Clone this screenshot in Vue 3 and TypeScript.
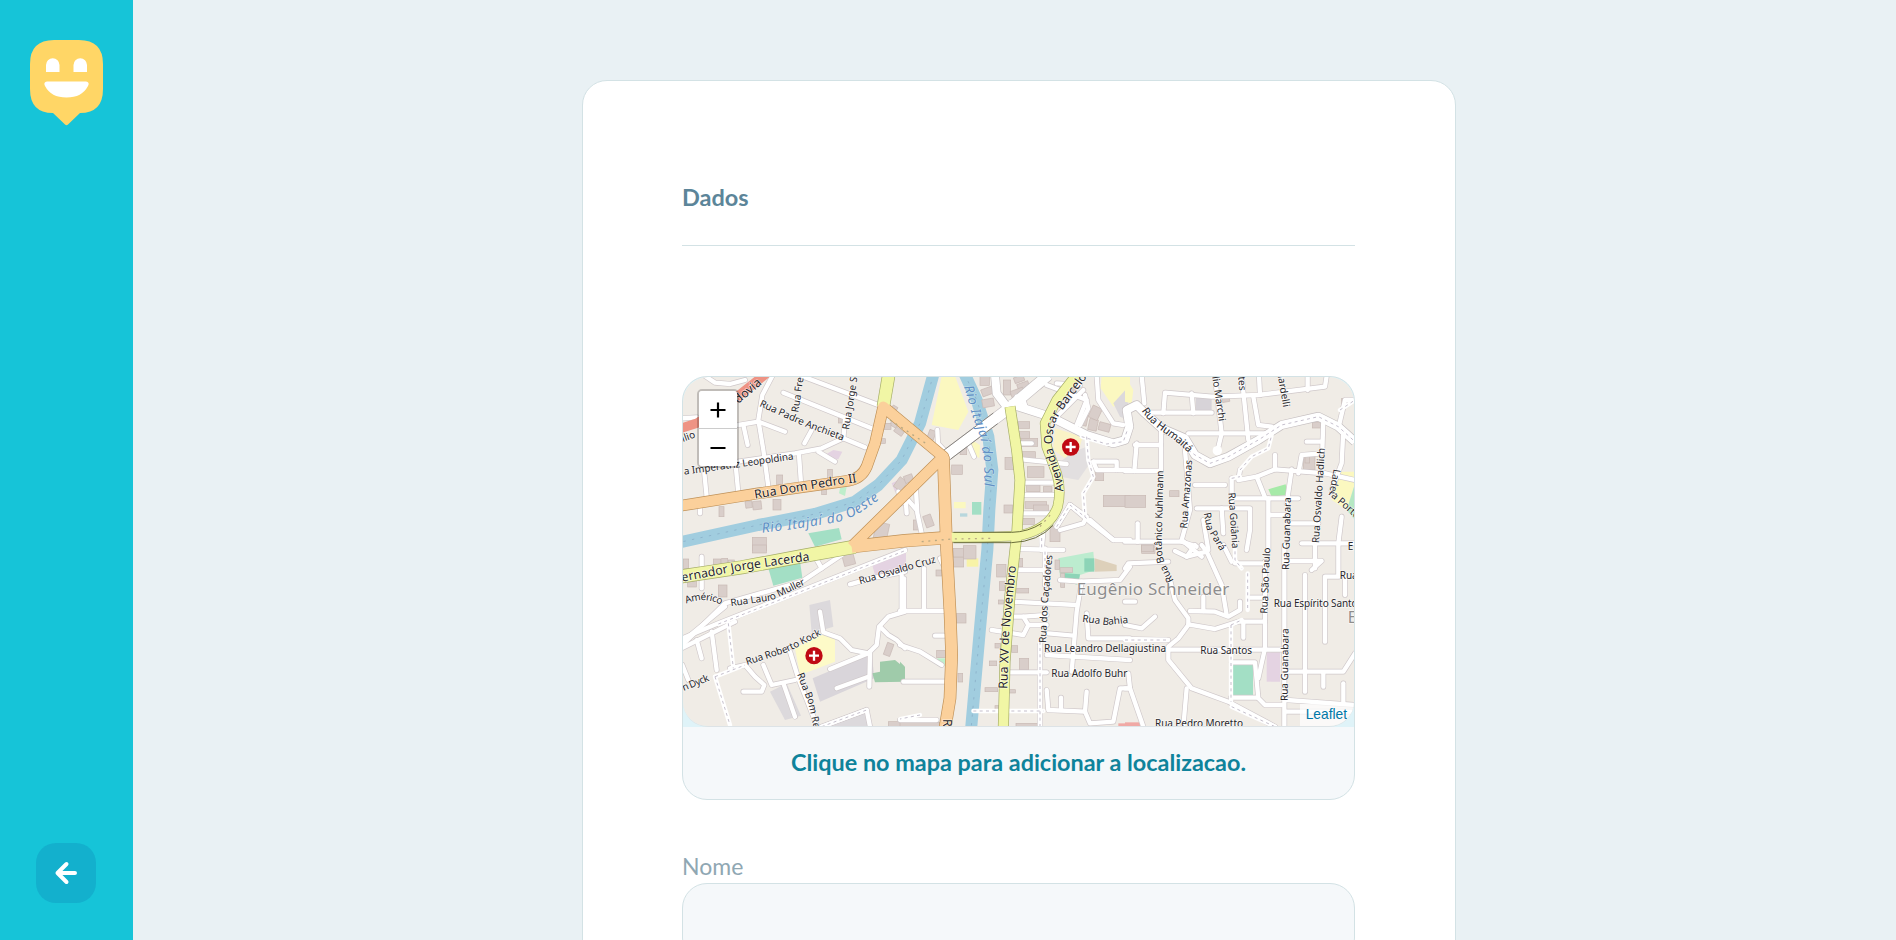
<script setup lang="ts">
import { ref } from 'vue'

interface Label {
  d: string
  text: string
  size?: number
  len?: number
  kind?: 'water' | 'place'
}

interface Area {
  d: string
  fill: string
}

interface Tile {
  x: number
  y: number
  roads: string[]
  paths?: string[]
  buildings: number[][]
  areas: Area[]
  labels: Label[]
}

interface Highway {
  d: string
  width: number
}

const green = '#a3dfc5'
const sand = '#fbf8c0'
const grey = '#dcd9dc'
const lilac = '#e4d3e2'

// Each tile uses its own local units, three per screen pixel.
const tiles: Tile[] = [
  {
    x: 0,
    y: 0,
    roads: [
      'M90 18L120 38L165 42L210 30', 'M292 18L262 75L250 150L265 240L280 350', 'M190 165L250 155L330 185',
      'M205 165L218 225', 'M380 18L610 105', 'M325 68L590 175', 'M410 180L388 220', 'M510 150L505 205L440 235L360 250L190 275',
      'M505 205L570 232', 'M430 245L480 275', 'M372 255L378 340', 'M182 285L190 370', 'M88 310L95 380', 'M75 410L75 430',
      'M690 380L725 420', 'M22 145L66 142', 'M670 365L680 400',
    ],
    buildings: [
      [132, 410, 15, 30, 0], [210, 395, 20, 20, -8], [232, 395, 26, 25, -6], [294, 388, 24, 32, 0], [232, 502, 42, 40, 0],
      [458, 298, 14, 26, 0], [440, 358, 14, 16, 0], [605, 455, 40, 50, 12], [655, 105, 16, 18, 30], [655, 145, 22, 22, 30],
      [305, 315, 18, 30, 0], [620, 160, 28, 18, 0], [490, 145, 14, 14, 0], [665, 170, 28, 16, 35], [615, 206, 16, 14, 0],
    ],
    areas: [
      { d: 'M400 490L492 474L500 508L420 530Z', fill: green }, { d: 'M440 260L475 240L502 245L490 268Z', fill: lilac },
      { d: 'M495 355L515 350L510 378L492 370Z', fill: '#bfeecb' }, { d: 'M650 340L670 330L680 350L660 365Z', fill: lilac },
    ],
    labels: [
      { d: 'M190 102L266 38L294 14', text: 'dovia', size: 37 },
      { d: 'M252 108L390 170L520 218', text: 'Rua Padre Anchieta', len: 272 }, { d: 'M370 128L386 20', text: 'Rua Fre' },
      { d: 'M522 180L548 18', text: 'Rua Jorge S', len: 160 }, { d: 'M28 314L190 292L360 268', text: 'a Imperatriz Leopoldina', len: 332 },
      { d: 'M24 216L72 198', text: 'ilio' }, { d: 'M240 386L430 354L560 334', text: 'Rua Dom Pedro II', size: 37, len: 310 },
      { d: 'M262 488L380 474L500 454L550 432L650 362', text: 'Rio Itajaí do Oeste', size: 41, kind: 'water', len: 372 },
    ],
  },
  {
    x: 675,
    y: 0,
    roads: [
      'M112 180L114 220L150 260', 'M205 220L222 260', 'M48 360L52 430L65 490', 'M18 400L20 430', 'M360 220L395 220', 'M365 268L500 282',
      'M370 338L460 338', 'M365 375L460 375', 'M360 430L450 430', 'M440 45L560 90L530 165', 'M555 75L565 115L540 165', 'M470 140L550 60',
      'M590 18L595 90L640 160L670 165', 'M580 275L650 275L650 300L690 300', 'M580 275L590 300L650 300', 'M570 450L640 510L690 510',
      'M470 470L510 405L560 440L550 460L480 480', 'M510 405L575 460L640 510', 'M430 485L425 540', 'M380 120L370 90L350 80',
      'M470 40L540 45',
    ],
    paths: ['M560 200L565 270L580 320L550 370L555 440', 'M470 470L510 405L560 445', 'M425 485L425 540', 'M545 200L620 222L670 215L682 180'],
    buildings: [
      [0, 320, 28, 35, 35], [68, 440, 24, 36, -20], [155, 285, 32, 28, 0], [240, 20, 28, 26, 0], [242, 60, 40, 22, -20], [245, 90, 35, 24, -10],
      [310, 30, 22, 45, 0], [340, 24, 30, 18, -20], [350, 44, 35, 20, -20], [330, 65, 40, 20, -20], [355, 185, 34, 20, 0], [355, 155, 34, 20, 0],
      [365, 205, 48, 24, 0], [360, 245, 46, 22, 0], [382, 290, 50, 32, 0], [380, 345, 40, 20, 0], [430, 350, 26, 16, 0], [315, 262, 30, 36, 0],
      [312, 405, 26, 24, 0], [375, 395, 65, 20, 0], [540, 130, 26, 34, 12], [570, 145, 26, 34, 12], [600, 155, 34, 24, 15], [580, 105, 30, 38, 25],
      [610, 376, 80, 34, 0], [585, 308, 26, 24, 0], [90, 178, 20, 28, 20], [180, 228, 20, 26, 0], [385, 60, 40, 18, -35], [500, 60, 22, 40, -35],
      [400, 405, 45, 20, 0], [365, 445, 38, 18, 0], [450, 470, 30, 45, 0], [40, 450, 16, 30, 0], [10, 320, 26, 22, -20],
    ],
    areas: [
      { d: 'M125 18L165 18L205 125L175 180L95 165Z', fill: sand }, { d: 'M215 210L240 225L238 265L205 240Z', fill: sand },
      { d: 'M216 396H244V434H216Z', fill: green }, { d: 'M162 396H197V415H162Z', fill: sand }, { d: 'M180 430H202V440H180Z', fill: '#b8d7dd' },
      { d: 'M465 175L548 200L535 245L495 265L460 240Z', fill: '#faf3c6' }, { d: 'M475 280L520 245L560 230L570 280L535 330L480 320Z', fill: '#e2dfe0' },
      { d: 'M605 18H690V90L640 110L602 55Z', fill: sand }, { d: 'M640 100L685 50V150L660 140Z', fill: grey },
    ],
    labels: [
      { d: 'M192 50L218 140L240 200L252 270L254 390', text: 'Rio Itajaí do Sul', size: 40, kind: 'water', len: 308 },
      { d: 'M490 364C488 300 459 270 458 220S466 148 495 110L566 14', text: 'Avenida Oscar Barcelos', size: 36 },
    ],
  },
  {
    x: 1350,
    y: 0,
    roads: [
      'M50 18L58 100', 'M115 130L120 68L260 80L400 75L600 50L605 18', 'M200 70L205 130', 'M60 128H260', 'M190 190L420 190', 'M270 20L290 190L278 240',
      'M350 18L370 210', 'M402 18L405 75', 'M548 18L548 60', 'M385 80L400 165L440 170L435 195', 'M108 180L108 300', 'M30 225H108', 'M0 303H108', 'M35 220L28 303',
      'M180 240L195 420L170 510L230 560', 'M210 345H300', 'M345 300L340 330L395 320L420 382', 'M395 320L450 298L600 310', 'M450 255V298', 'M520 310L530 255L590 250',
      'M330 385H520', 'M500 298L485 400', 'M430 385V540', 'M435 435H480', 'M500 460H580', 'M595 150L592 240', 'M545 215H590', 'M655 180L650 280L620 360',
      'M640 175L660 90L690 90', 'M215 415H375V480L365 540', 'M290 415L295 490', 'M235 450L250 540', 'M0 515H170', 'M38 460V515', 'M530 520H690', 'M650 440L640 520',
      'M170 515L215 530', 'M600 310L690 330', 'M320 325V400',
    ],
    paths: ['M345 300L380 260L430 235L440 195', 'M320 325L345 320', 'M645 120L690 90'],
    buildings: [
      [0, 376, 62, 36, 0], [134, 362, 28, 18, 0], [290, 82, 22, 16, -10], [562, 156, 26, 18, 0], [535, 255, 35, 44, 0], [540, 255, 14, 24, 0], [50, 520, 40, 30, 0], [650, 85, 18, 24, 0],
    ],
    areas: [
      { d: 'M0 18L25 60L20 100L0 95Z', fill: sand }, { d: 'M212 80H260V125H212Z', fill: '#d7d3d8' }, { d: 'M430 358L482 343L488 374L440 380Z', fill: '#a6eaa8' },
      { d: 'M640 305H690V340L665 420L620 390Z', fill: sand }, { d: 'M690 340V450L665 420Z', fill: '#b5e8c3' }, { d: 'M232 410H260V422H232Z', fill: '#f0b0ac' },
    ],
    labels: [
      { d: 'M50 122C90 185 145 195 194 254', text: 'Rua Humaitá', size: 32, len: 190 }, { d: 'M262 20L284 170', text: 'lio Marchi', len: 136 }, { d: 'M340 20L344 80', text: 'tes' },
      { d: 'M458 18L478 130', text: 'iardelli', len: 96 }, { d: 'M186 476L202 265', text: 'Rua Amazonas', len: 206 }, { d: 'M146 632C130 600 112 575 110 530L116 280', text: 'Rua Botânico Kuhlmann', len: 338 },
      { d: 'M310 368L322 540', text: 'Rua Goiânia', len: 168 }, { d: 'M236 430L245 475L290 550', text: 'Rua Pará', len: 126 },
      { d: 'M582 520L600 230', text: 'Rua Osvaldo Hadlich', len: 286 }, { d: 'M626 296L612 375L700 452', text: 'Ladeira Porto' },
      { d: 'M492 600L498 375', text: 'Rua Guanabara', len: 218 }, { d: 'M668 540H690', text: 'E' },
    ],
  },
  {
    x: 0,
    y: 525,
    roads: [
      'M80 35L80 130', 'M500 30L380 110L150 175L22 300', 'M22 290L150 185', 'M22 280L130 235L690 15', 'M65 285L80 340', 'M110 260L125 375',
      'M435 200L445 262L495 280L530 315L580 325L605 300L612 245L640 215L690 200', 'M615 245L640 270L665 285L690 310', 'M680 90V200', 'M525 118L590 100L690 80',
      'M0 320L180 230', 'M585 320L583 425', 'M465 372L580 325', 'M485 430L580 395', 'M165 370L210 360L240 395L268 420L260 440L205 440', 'M265 360L290 420L360 405',
      'M325 415L360 515', 'M345 320L370 400L425 540', 'M440 545L575 495L585 545', 'M420 35L440 70', 'M22 360L40 405',
    ],
    paths: ['M130 237L690 17', 'M160 235L175 370', 'M120 395L165 540', 'M120 395L185 370L210 360', 'M440 545L575 495'],
    buildings: [
      [232, 0, 42, 24, 0], [115, 42, 22, 38, 0], [140, 40, 18, 30, 0], [160, 45, 18, 26, 0], [38, 102, 26, 24, 0], [130, 120, 26, 36, 0], [500, 30, 34, 36, -15], [638, 292, 20, 38, 20], [25, 42, 16, 28, 0], [640, 530, 50, 18, 0],
    ],
    areas: [
      { d: 'M280 70L375 48L382 98L295 122Z', fill: green }, { d: 'M590 55L690 15V75L600 90Z', fill: lilac },
      { d: 'M403 180L465 165L475 245L410 265Z', fill: grey }, { d: 'M360 310L430 270H480V350L375 390Z', fill: '#fdfac8' }, { d: 'M413 400L590 325L598 400L435 470Z', fill: '#d9d5da' },
      { d: 'M592 385L615 380V350L660 345L690 370V410L600 412Z', fill: '#9fcbaa' }, { d: 'M285 440L335 415L378 512L330 525Z', fill: grey }, { d: 'M430 545L575 485L592 545Z', fill: grey },
    ],
    labels: [
      { d: 'M22 110L200 76L420 44', text: 'ernador Jorge Lacerda', size: 37, len: 388 }, { d: 'M168 184L290 166L400 114', text: 'Rua Lauro Muller', len: 236 },
      { d: 'M34 176Q90 152 145 182', text: 'Américo', len: 108 }, { d: 'M555 118L790 50', text: 'Rua Osvaldo Cruz', len: 238 }, { d: 'M216 360L340 320L455 262', text: 'Rua Roberto Kock', len: 242 },
      { d: 'M26 438L110 404', text: 'n Dyck', len: 84 }, { d: 'M366 388L400 475L420 570', text: 'Rua Bom Retiro' },
    ],
  },
  {
    x: 675,
    y: 525,
    roads: [
      'M355 12L490 15', 'M350 75H440', 'M435 10V120', 'M335 170L530 180', 'M325 215L370 215L385 240L370 270L275 255', 'M385 240H440', 'M370 215L440 210',
      'M545 110L530 200L515 380', 'M540 110L660 105L690 65', 'M445 265L520 272', 'M320 382H440', 'M560 205L565 280H690', 'M440 330L690 345', 'M0 198H130', 'M72 70V195', 'M12 100V195',
      'M105 272H132', 'M0 300L60 320L125 360', 'M10 410H135', 'M0 525H110', 'M420 300V545', 'M440 435L445 495L555 500L560 440', 'M483 458V495', 'M555 500L570 535L640 530L660 430L690 430', 'M540 110L480 105', 'M120 40L130 60',
    ],
    paths: ['M420 290V545', 'M220 498H430', 'M60 510L0 522', 'M435 20V100'],
    buildings: [
      [168, 206, 30, 28, 0], [110, 316, 26, 22, 0], [174, 385, 14, 26, 0], [160, 10, 32, 26, 0], [190, 2, 38, 40, 0], [155, 38, 36, 28, 0], [290, 58, 28, 38, 0], [350, 40, 18, 25, 0], [350, 130, 36, 14, 0],
      [298, 110, 16, 26, 0], [295, 165, 15, 12, 0], [285, 295, 16, 14, 0], [268, 348, 22, 14, 0], [335, 302, 18, 20, 0], [358, 340, 28, 34, 0], [255, 428, 38, 12, 0], [320, 434, 26, 10, 0], [348, 535, 65, 12, 0],
      [285, 482, 12, 12, 0], [465, 45, 14, 28, 0], [480, 68, 38, 14, 0], [482, 85, 12, 42, 0], [0, 532, 120, 14, 0], [108, 75, 18, 18, 0],
    ],
    areas: [
      { d: 'M475 40L580 20L585 75L540 90L530 120L480 95Z', fill: '#bceccf' }, { d: 'M553 40H583V80H553Z', fill: '#8dd4b7' }, { d: 'M495 85L540 88L535 118L495 112Z', fill: '#8dd4b7' },
      { d: 'M584 40L650 60V78L584 80Z', fill: '#ddd0ba' }, { d: 'M200 40H235V65H200Z', fill: '#f8f3a7' }, { d: 'M0 350L15 365V400L0 405Z', fill: '#9fcbaa' }, { d: 'M112 340H135V362H112Z', fill: '#bff0cb' }, { d: 'M0 20H18V50L0 60Z', fill: lilac },
      { d: 'M655 535H690V545H655Z', fill: '#f0a9a5' },
    ],
    labels: [
      { d: 'M322 432L328 260L348 60', text: 'Rua XV de Novembro', size: 37, len: 370 }, { d: 'M438 294L444 170L458 25', text: 'Rua dos Caçadores', len: 264 },
      { d: 'M530 150H1010', text: 'Eugênio Schneider', size: 51, kind: 'place', len: 458 }, { d: 'M546 230L620 240L700 232', text: 'Rua Bahia', len: 140 },
      { d: 'M432 322H820', text: 'Rua Leandro Dellagiustina', len: 366 }, { d: 'M454 396H700', text: 'Rua Adolfo Buhr', len: 228 }, { d: 'M128 522V600', text: 'Rua', size: 37 },
    ],
  },
  {
    x: 1350,
    y: 525,
    roads: [
      'M0 70L10 55L130 50', 'M150 18L185 35L210 0', 'M185 35L245 20L290 120L305 210', 'M245 20L230 0', 'M135 105L150 165L190 220V240L160 280L130 305V345L200 430L310 470L450 545', 'M195 198L270 200L310 215L345 195V170', 'M235 155V198',
      'M190 238L270 252L340 230H420', 'M355 230V278', 'M0 282L130 285', 'M0 240L50 250L90 215', 'M130 314H470', 'M185 430L175 545', 'M0 430L15 430L55 545', 'M10 385L15 430', 'M420 50V310L400 400', 'M330 55H420', 'M375 158H420',
      'M478 0V545', 'M320 352H390L400 460L420 480H470', 'M318 458H395', 'M540 90V440', 'M480 380H655L690 325', 'M595 385V425', 'M600 290V95H640L640 0', 'M485 48H590L560 75', 'M570 0V70', 'M655 415V475', 'M485 465L690 480', 'M480 500H690',
      'M295 0L320 50', 'M660 90V150', 'M0 170H30',
    ],
    paths: ['M368 85V195', 'M318 240V470', 'M330 0V45L350 70', 'M320 485L450 545', 'M318 240L350 225', 'M0 285H125'],
    buildings: [[50, 0, 36, 20, 0]],
    areas: [
      { d: 'M320 358H384V452H320Z', fill: green }, { d: 'M425 322H465V410H425Z', fill: lilac }, { d: 'M0 532H55V545H0Z', fill: '#f0a9a5' },
    ],
    labels: [
      { d: 'M427 206L436 4', text: 'Rua São Paulo', len: 198 }, { d: 'M446 186H720', text: 'Rua Espírito Santo', len: 252 }, { d: 'M226 326H400', text: 'Rua Santos', len: 155 }, { d: 'M488 468L491 246', text: 'Rua Guanabara', len: 218 },
      { d: 'M90 546H365', text: 'Rua Pedro Moretto', len: 264 }, { d: 'M644 102H700', text: 'Rua' }, { d: 'M668 234H720', text: 'E', size: 48, kind: 'place' },
    ],
  },
]

const rivers = [
  'M0 520L250 465L420 432L540 395L610 345L680 270L735 160L776 10',
  'M868 10L905 90L940 200L952 300L943 420L937 540L915 775L888 1080',
]

const avenues: Highway[] = [
  { d: 'M815 255L995 120L1120 15', width: 32 },
  { d: 'M995 110L965 70L960 15', width: 24 },
  { d: 'M1000 100L1125 140L1235 195L1315 220L1350 210L1363 170L1355 120L1385 105L1410 130L1460 175L1530 205L1560 255L1605 280L1660 260L1750 210L1820 165L1930 140L1990 170L2040 215', width: 24 },
]

const yellowRoads: Highway[] = [
  { d: 'M625 110L642 10', width: 36 },
  { d: 'M0 622L200 592L400 555L540 530', width: 38 },
  { d: 'M1005 110L1025 240L1035 330L1025 500L1020 540L1005 675L990 875L985 1075', width: 29 },
  { d: 'M1208 10L1145 90L1110 160L1115 230L1145 310Q1160 360 1148 410Q1125 475 1040 495Q1010 502 825 502', width: 27 },
]

const orangeRoads: Highway[] = [
  { d: 'M0 410L250 370L520 332Q560 325 575 290L600 220L625 110L805 260L530 530', width: 31 },
  { d: 'M805 260L815 540L825 725L830 855L825 985L810 1075', width: 34 },
  { d: 'M530 530L690 512L815 503', width: 36 },
]

const hospitals = [
  { x: 1187, y: 231 },
  { x: 417, y: 857 },
]

const zoom = ref(15)
const name = ref('')

const shift = (tile: Tile): string => `translate(${tile.x} ${tile.y})`
</script>

<template>
  <div class="page">
    <aside class="sidebar">
      <svg class="logo" width="73" height="86" viewBox="0 0 73 86" aria-label="Happy">
        <path
          fill="#ffd666"
          d="M24 0H49Q73 0 73 24V49Q73 73 50 73L38 84.500Q36.500 86 35 84.500L23 73Q0 73 0 49V24Q0 0 24 0Z"
        />
        <path fill="#fff" d="M16 32V25A6.700 6.700 0 0 1 29.500 25V32ZM43.500 32V25A6.700 6.700 0 0 1 57 25V32Z" />
        <path fill="#fff" d="M17 41.500H56Q60 42 58 46Q52 57.500 36.500 57.500T15 46Q13 42 17 41.500Z" />
      </svg>
      <button class="back" type="button" aria-label="Voltar">
        <svg width="24" height="24" viewBox="0 0 24 24">
          <path d="M21 12H3.500M12.500 3L3.500 12L12.500 21" />
        </svg>
      </button>
    </aside>

    <main class="content">
      <form class="card" @submit.prevent>
        <h2 class="legend"><span class="legend-text">Dados</span></h2>

        <section class="map-box">
          <div class="map">
            <svg class="map-canvas" viewBox="24 21 2013 1050" preserveAspectRatio="none">
              <rect x="0" y="0" width="2060" height="1100" fill="#f0ece6" />
              <g v-for="(tile, i) in tiles" :key="`area${i}`" :transform="shift(tile)">
                <path v-for="(area, j) in tile.areas" :key="j" :d="area.d" :fill="area.fill" />
              </g>
              <g class="river"><path v-for="d in rivers" :key="d" :d="d" /></g>
              <g class="flow"><path v-for="d in rivers" :key="d" :d="d" /></g>
              <g v-for="(tile, i) in tiles" :key="`house${i}`" :transform="shift(tile)" class="building">
                <rect
                  v-for="(b, j) in tile.buildings"
                  :key="j"
                  :x="b[0]"
                  :y="b[1]"
                  :width="b[2]"
                  :height="b[3]"
                  :transform="`rotate(${b[4]} ${b[0]} ${b[1]})`"
                />
              </g>
              <g v-for="(tile, i) in tiles" :key="`case${i}`" :transform="shift(tile)" class="street-case">
                <path v-for="d in tile.roads" :key="d" :d="d" />
              </g>
              <g class="avenue-case">
                <path v-for="r in avenues" :key="r.d" :d="r.d" :stroke-width="r.width + 4" />
              </g>
              <g v-for="(tile, i) in tiles" :key="`street${i}`" :transform="shift(tile)" class="street">
                <path v-for="d in tile.roads" :key="d" :d="d" />
                <path v-for="d in tile.paths" :key="`p${d}`" :d="d" />
              </g>
              <circle cx="1627" cy="242" r="14" fill="#fff" />
              <g class="avenue">
                <path v-for="r in avenues" :key="r.d" :d="r.d" :stroke-width="r.width" />
              </g>
              <g v-for="(tile, i) in tiles" :key="`dash${i}`" :transform="shift(tile)" class="footpath">
                <path v-for="d in tile.paths" :key="d" :d="d" />
              </g>
              <path class="footpath" d="M1540 240L1560 255L1605 280L1660 260L1750 210L1820 165L1930 140L1990 170L2040 215" />
              <path class="bridge" d="M806 241L955 129M826 268L968 161" />
              <path class="trunk" d="M0 180L65 160L180 85L275 10" />
              <g class="yellow-case">
                <path v-for="r in yellowRoads" :key="r.d" :d="r.d" :stroke-width="r.width + 4" />
              </g>
              <g class="orange-case">
                <path v-for="r in orangeRoads" :key="r.d" :d="r.d" :stroke-width="r.width + 4" />
              </g>
              <g class="yellow">
                <path v-for="r in yellowRoads" :key="r.d" :d="r.d" :stroke-width="r.width" />
              </g>
              <g class="orange">
                <path v-for="r in orangeRoads" :key="r.d" :d="r.d" :stroke-width="r.width" />
              </g>
              <path class="dots" d="M740 515L830 507L955 505M1095 470L1130 430M645 150L760 225" />
              <path class="bridge dark" d="M835 487H1010Q1060 486 1100 460M835 518H1010Q1090 515 1135 465" />
              <g v-for="(tile, i) in tiles" :key="`label${i}`" :transform="shift(tile)" class="labels">
                <template v-for="(label, j) in tile.labels" :key="j">
                  <path :id="`way-${i}-${j}`" :d="label.d" fill="none" />
                  <text :class="label.kind" :font-size="label.size ?? 30">
                    <textPath :href="`#way-${i}-${j}`" :textLength="label.len">{{ label.text }}</textPath>
                  </text>
                </template>
              </g>
              <g v-for="h in hospitals" :key="h.x" :transform="`translate(${h.x} ${h.y})`">
                <circle r="26" fill="#c00a14" />
                <path d="M-15 0H15M0 -15V15" stroke="#fff" stroke-width="7" />
              </g>
            </svg>
            <div class="zoom-control">
              <button type="button" aria-label="Zoom in" @click="zoom++">
                <svg width="16" height="16" viewBox="0 0 16 16"><path d="M0.500 8H15.500M8 0.500V15.500" /></svg>
              </button>
              <button type="button" aria-label="Zoom out" @click="zoom--">
                <svg width="16" height="16" viewBox="0 0 16 16"><path d="M0.500 8H15.500" /></svg>
              </button>
            </div>
            <div class="attribution"><a>Leaflet</a></div>
          </div>
          <div class="hint"><span class="hint-text">Clique no mapa para adicionar a localizacao.</span></div>
        </section>

        <label class="field-label" for="name">Nome</label>
        <input id="name" v-model="name" class="field" />
      </form>
    </main>
  </div>
</template>

<style>
html,
body {
  margin: 0;
  overflow: hidden;
}
</style>

<style scoped>
.page {
  display: flex;
  height: 940px;
  overflow: hidden;
  background: #e9f1f4;
  font-family: Lato, 'Open Sans', sans-serif;
}

.sidebar {
  box-sizing: border-box;
  display: flex;
  flex-direction: column;
  flex: none;
  justify-content: space-between;
  align-items: center;
  width: 133px;
  height: 940px;
  padding: 40px 0 37px;
  background: #16c4d8;
}

.logo {
  display: block;
}

.back {
  display: flex;
  align-items: center;
  justify-content: center;
  width: 60px;
  height: 60px;
  margin-right: 1px;
  padding: 0;
  border: 0;
  border-radius: 20px;
  background: #13b0cd;
}

.back path {
  fill: none;
  stroke: #fff;
  stroke-width: 4;
  stroke-linecap: round;
  stroke-linejoin: round;
}

.content {
  flex: 1;
  padding: 80px 440px 0 448.500px;
}

.card {
  box-sizing: border-box;
  width: 874px;
  height: 1400px;
  padding: 99px 99.500px 0;
  border: 1px solid #d3e2e5;
  border-radius: 25px;
  background: #fff;
}

.legend {
  box-sizing: border-box;
  height: 66px;
  margin: 0 0 130px;
  border-bottom: 1px solid #d3e2e5;
  color: #5c8599;
  font-size: 23.500px;
  font-weight: 700;
  line-height: 34px;
}

.map-box {
  box-sizing: border-box;
  height: 424px;
  overflow: hidden;
  border: 1px solid #d3e2e5;
  border-radius: 25px;
  background: linear-gradient(#dff3f8 350px, #f5f8fa 350px);
}

.map {
  position: relative;
  height: 349px;
  overflow: hidden;
  border-radius: 25px;
  border-bottom: 1px solid #dde3e6;
}

.map-canvas {
  display: block;
  width: 100%;
  height: 350px;
}

.map-canvas path {
  stroke-linejoin: round;
}

.river {
  fill: none;
  stroke: #a1cddf;
  stroke-width: 36;
}

.flow {
  fill: none;
  stroke: #8fb5cd;
  stroke-width: 3;
  stroke-dasharray: 7 19;
}

.building {
  fill: #d9ceca;
  stroke: #c8b9b4;
  stroke-width: 2;
}

.street-case,
.street {
  fill: none;
  stroke-linecap: round;
}

.street-case {
  stroke: #cfc8ca;
  stroke-width: 17;
}

.street {
  stroke: #fff;
  stroke-width: 13;
}

.avenue-case {
  fill: none;
  stroke: #c5bfc0;
}

.avenue {
  fill: none;
  stroke: #fff;
}

.footpath {
  fill: none;
  stroke: #c5bfcc;
  stroke-width: 3;
  stroke-dasharray: 9 10;
}

.bridge {
  fill: none;
  stroke: #77736d;
  stroke-width: 2.500;
}

.bridge.dark {
  stroke: #6a6e3a;
  stroke-width: 3;
}

.trunk {
  fill: none;
  stroke: #ee9384;
  stroke-width: 28;
}

.yellow-case {
  fill: none;
  stroke: #a5ad68;
}

.yellow {
  fill: none;
  stroke: #f1f6a5;
}

.orange-case {
  fill: none;
  stroke: #bf9158;
}

.orange {
  fill: none;
  stroke: #fbd09b;
}

.dots {
  fill: none;
  stroke: #b9a983;
  stroke-width: 4;
  stroke-dasharray: 6 14;
}

.labels {
  fill: #28272c;
  stroke: rgba(255, 255, 255, 0.65);
  stroke-width: 4;
  paint-order: stroke;
  font-family: 'Noto Sans', sans-serif;
}

.labels path {
  stroke: none;
}

.labels .water {
  fill: #5f8fc4;
  stroke: rgba(255, 255, 255, 0.3);
  font-style: italic;
}

.labels .place {
  fill: #8e8d8d;
}

.zoom-control {
  position: absolute;
  top: 12px;
  left: 13.500px;
  overflow: hidden;
  border: 2px solid rgba(0, 0, 0, 0.2);
  border-radius: 5px;
  background-clip: padding-box;
}

.zoom-control button {
  box-sizing: content-box;
  display: flex;
  align-items: center;
  justify-content: center;
  width: 38px;
  height: 37px;
  padding: 0;
  border: 0;
  background: #fff;
}

.zoom-control button:first-child {
  border-bottom: 1px solid #ccc;
}

.zoom-control path {
  stroke: #000;
  stroke-width: 2.2;
}

.attribution {
  position: absolute;
  right: 0;
  bottom: 0;
  padding: 0 7px 0 6px;
  background: rgba(255, 255, 255, 0.7);
  color: #0078a8;
  font: 13.750px/22px 'Liberation Sans', Arial, sans-serif;
}

.hint {
  display: flex;
  align-items: center;
  justify-content: center;
  height: 70px;
  color: #0f839b;
  font-size: 23.400px;
  font-weight: 700;
}

.field-label {
  display: block;
  height: 34px;
  margin-top: 49px;
  color: #8fa7b3;
  font-size: 23px;
  line-height: 34px;
}

.field {
  box-sizing: border-box;
  display: block;
  width: 100%;
  height: 80px;
  border: 1px solid #d3e2e5;
  border-radius: 25px;
  background: #f5f8fa;
}
</style>
